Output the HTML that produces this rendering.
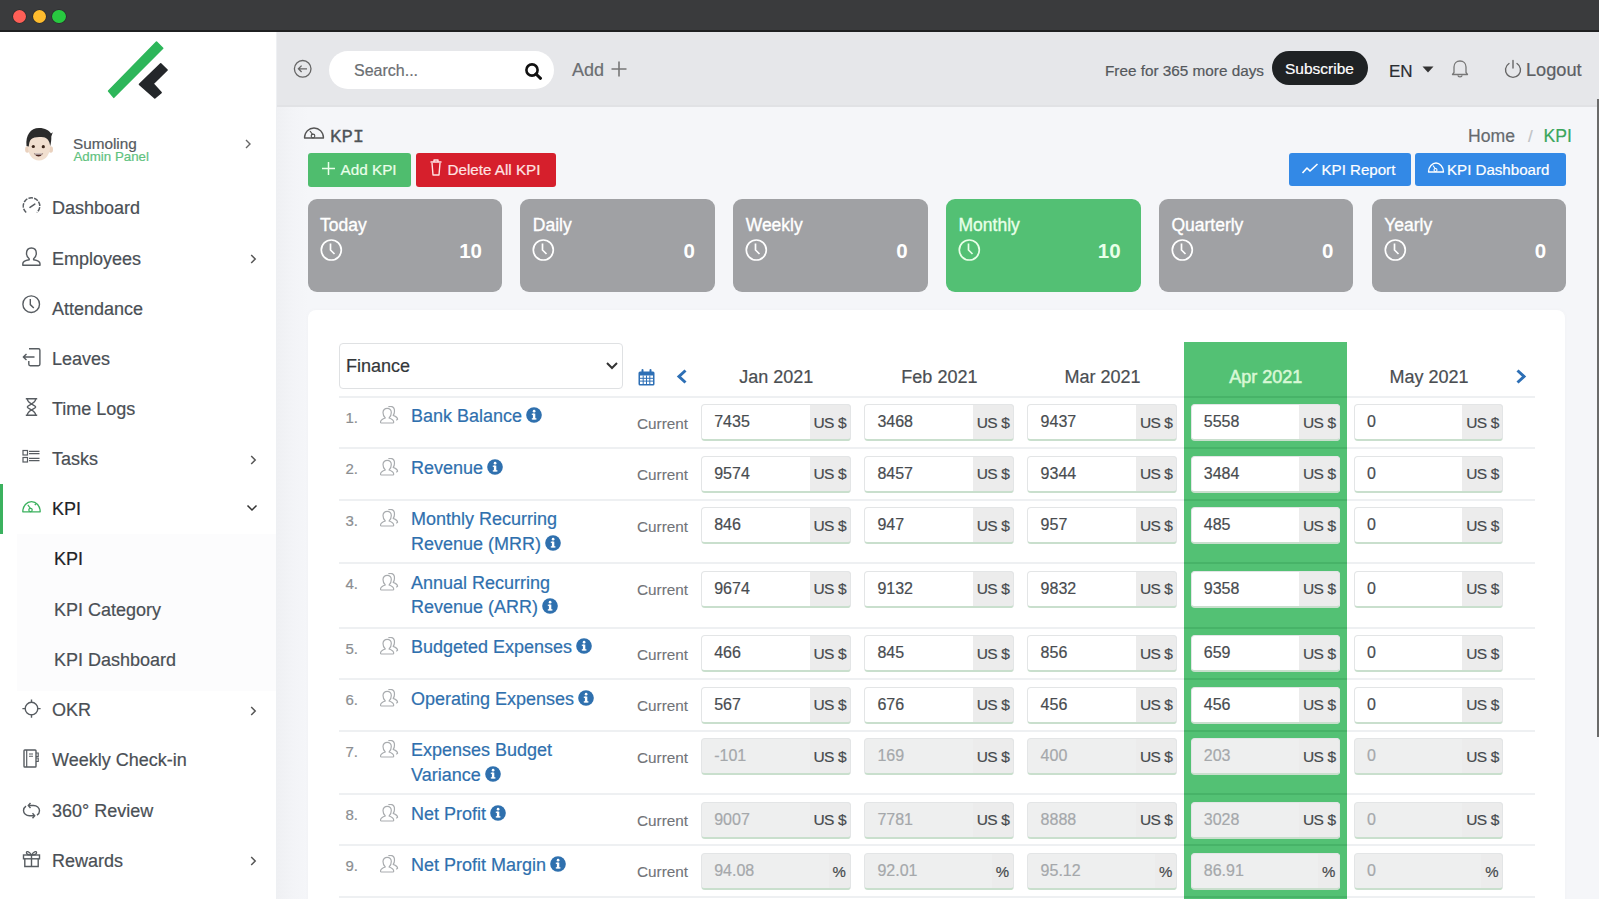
<!DOCTYPE html>
<html><head><meta charset="utf-8"><style>
html,body{margin:0;padding:0;width:1599px;height:899px;overflow:hidden;background:#f5f6f9}
.t{position:absolute;line-height:1;white-space:nowrap;font-family:'Liberation Sans',sans-serif;-webkit-text-stroke:0.2px currentColor}
.r{position:absolute;display:block}
</style></head><body>
<div class="r" style="left:0.00px;top:0.00px;width:1599.00px;height:899.00px;background:#f5f6f9"></div>
<div class="r" style="left:0.00px;top:32.00px;width:276.00px;height:867.00px;background:#ffffff"></div>
<div class="r" style="left:276.00px;top:32.00px;width:1.00px;height:867.00px;background:#eef0f3"></div>
<div class="r" style="left:277.00px;top:107.00px;width:32.00px;height:792.00px;background:linear-gradient(to right,#eff0f3,#f3f4f7 50%,#f5f6f9)"></div>
<div class="r" style="left:277.00px;top:32.00px;width:1322.00px;height:75.00px;background:#e6e7ea"></div>
<div class="r" style="left:277.00px;top:104.50px;width:1322.00px;height:2.50px;background:#e1e2e5"></div>
<div class="r" style="left:0.00px;top:0.00px;width:1599.00px;height:32.00px;background:#3a3b3d"></div>
<div class="r" style="left:0.00px;top:30.00px;width:1599.00px;height:2.00px;background:#1f2021"></div>
<div class="r" style="left:12.75px;top:9.75px;width:13.50px;height:13.50px;background:#fe5f57;border-radius:50%;box-shadow:0 0 0 0.6px rgba(0,0,0,0.35)"></div>
<div class="r" style="left:32.75px;top:9.75px;width:13.50px;height:13.50px;background:#febc2e;border-radius:50%;box-shadow:0 0 0 0.6px rgba(0,0,0,0.35)"></div>
<div class="r" style="left:52.25px;top:9.75px;width:13.50px;height:13.50px;background:#28c840;border-radius:50%;box-shadow:0 0 0 0.6px rgba(0,0,0,0.35)"></div>
<div class="r" style="left:1597.00px;top:99.00px;width:2.00px;height:638.00px;background:#6b6b6b"></div>
<svg class="r" style="left:100.00px;top:36.00px;" width="80" height="70" viewBox="0 0 80 70"><polygon points="56.5,6.1 62.7,12.2 13.8,61.3 8.6,55" fill="#2db65a" stroke="#2db65a" stroke-width="1.6" stroke-linejoin="round"/><polygon points="60.7,27.9 67.1,34 53.1,47.8 61.1,56.6 54.8,61.8 39.5,48.4" fill="#24272a" stroke="#24272a" stroke-width="1.6" stroke-linejoin="round"/></svg>
<svg class="r" style="left:24.00px;top:126.00px;" width="30" height="36" viewBox="0 0 30 36"><ellipse cx="3.3" cy="23.5" rx="2.2" ry="3.2" fill="#ead2bf"/><ellipse cx="26.8" cy="23.5" rx="2.2" ry="3.2" fill="#ead2bf"/><path d="M3.5,18 C3.5,9 8,6 15,6 C22,6 26.5,9 26.5,18 C26.5,28 22,34.5 15,34.5 C8,34.5 3.5,28 3.5,18 Z" fill="#f1dfcf"/><path d="M2.5,20 C1.5,9 6.5,2 15,2 C21,2 25.5,4.5 27,7.5 L28.8,6.3 L27.3,10.5 C27.5,13.5 27,17 26.2,20 C25.5,15 23.5,12 19.5,11.3 C14,10.4 9.5,11.2 7.2,13.2 C5.6,14.8 5,17 4.8,20.5 Z" fill="#2b2b2b"/><circle cx="9.3" cy="20.5" r="1.6" fill="#3a2418"/><circle cx="19.3" cy="20.7" r="1.6" fill="#3a2418"/><path d="M9.8,27.5 Q14.6,33.5 19.2,27.5 Z" fill="#4a2520"/><path d="M10.6,27.6 H18.4 L18,28.6 H11 Z" fill="#fff"/></svg>
<div class="t" style="left:73.00px;top:136.00px;font-size:15.3px;color:#555a60;font-weight:400;font-family:'Liberation Sans',sans-serif;">Sumoling</div>
<div class="t" style="left:73.50px;top:150.19px;font-size:13.3px;color:#5fc27e;font-weight:400;font-family:'Liberation Sans',sans-serif;">Admin Panel</div>
<svg class="r" style="left:243.00px;top:138.00px;" width="10" height="12" viewBox="0 0 10 12"><path d="M3,2 L7,6 L3,10" fill="none" stroke="#666" stroke-width="1.4"/></svg>
<div class="t" style="left:52.00px;top:199.10px;font-size:18px;color:#4a4f55;font-weight:400;font-family:'Liberation Sans',sans-serif;">Dashboard</div>
<div class="t" style="left:52.00px;top:249.50px;font-size:18px;color:#4a4f55;font-weight:400;font-family:'Liberation Sans',sans-serif;">Employees</div>
<svg class="r" style="left:248.00px;top:251.80px;" width="10" height="14" viewBox="0 0 10 14"><path d="M3.2,3 L7.2,7 L3.2,11" fill="none" stroke="#555" stroke-width="1.5"/></svg>
<div class="t" style="left:52.00px;top:299.70px;font-size:18px;color:#4a4f55;font-weight:400;font-family:'Liberation Sans',sans-serif;">Attendance</div>
<div class="t" style="left:52.00px;top:349.90px;font-size:18px;color:#4a4f55;font-weight:400;font-family:'Liberation Sans',sans-serif;">Leaves</div>
<div class="t" style="left:52.00px;top:400.10px;font-size:18px;color:#4a4f55;font-weight:400;font-family:'Liberation Sans',sans-serif;">Time Logs</div>
<div class="t" style="left:52.00px;top:450.30px;font-size:18px;color:#4a4f55;font-weight:400;font-family:'Liberation Sans',sans-serif;">Tasks</div>
<svg class="r" style="left:248.00px;top:452.60px;" width="10" height="14" viewBox="0 0 10 14"><path d="M3.2,3 L7.2,7 L3.2,11" fill="none" stroke="#555" stroke-width="1.5"/></svg>
<div class="t" style="left:52.00px;top:500.40px;font-size:18px;color:#1f2326;font-weight:400;font-family:'Liberation Sans',sans-serif;">KPI</div>
<div class="r" style="left:0.00px;top:484.00px;width:3.00px;height:50.00px;background:#3bb15e"></div>
<svg class="r" style="left:246.00px;top:503.00px;" width="12" height="10" viewBox="0 0 12 10"><path d="M1.5,2.5 L6,7 L10.5,2.5" fill="none" stroke="#333" stroke-width="1.5"/></svg>
<div class="r" style="left:17.00px;top:534.00px;width:259.00px;height:157.00px;background:#fcfcfd"></div>
<div class="t" style="left:54.00px;top:550.10px;font-size:18px;color:#1f2326;font-weight:400;font-family:'Liberation Sans',sans-serif;">KPI</div>
<div class="t" style="left:54.00px;top:600.70px;font-size:18px;color:#4a4f55;font-weight:400;font-family:'Liberation Sans',sans-serif;">KPI Category</div>
<div class="t" style="left:54.00px;top:650.70px;font-size:18px;color:#4a4f55;font-weight:400;font-family:'Liberation Sans',sans-serif;">KPI Dashboard</div>
<div class="t" style="left:52.00px;top:701.20px;font-size:18px;color:#4a4f55;font-weight:400;font-family:'Liberation Sans',sans-serif;">OKR</div>
<svg class="r" style="left:248.00px;top:703.50px;" width="10" height="14" viewBox="0 0 10 14"><path d="M3.2,3 L7.2,7 L3.2,11" fill="none" stroke="#555" stroke-width="1.5"/></svg>
<div class="t" style="left:52.00px;top:751.40px;font-size:18px;color:#4a4f55;font-weight:400;font-family:'Liberation Sans',sans-serif;">Weekly Check-in</div>
<div class="t" style="left:52.00px;top:801.70px;font-size:18px;color:#4a4f55;font-weight:400;font-family:'Liberation Sans',sans-serif;">360° Review</div>
<div class="t" style="left:52.00px;top:851.90px;font-size:18px;color:#4a4f55;font-weight:400;font-family:'Liberation Sans',sans-serif;">Rewards</div>
<svg class="r" style="left:248.00px;top:854.20px;" width="10" height="14" viewBox="0 0 10 14"><path d="M3.2,3 L7.2,7 L3.2,11" fill="none" stroke="#555" stroke-width="1.5"/></svg>
<svg class="r" style="left:293.00px;top:59.00px;" width="20" height="20" viewBox="0 0 20 20"><circle cx="9.7" cy="9.8" r="8.3" fill="none" stroke="#666" stroke-width="1.3"/><path d="M5.5,9.8 H14 M8.6,6.6 L5.4,9.8 L8.6,13" fill="none" stroke="#666" stroke-width="1.3"/></svg>
<div class="r" style="left:329.00px;top:51.00px;width:225.00px;height:38.00px;background:#ffffff;border-radius:19px"></div>
<div class="t" style="left:354.00px;top:63.10px;font-size:16px;color:#6b6e72;font-weight:400;font-family:'Liberation Sans',sans-serif;">Search...</div>
<svg class="r" style="left:524.00px;top:62.00px;" width="20" height="18" viewBox="0 0 20 18"><circle cx="8" cy="8" r="5.6" fill="none" stroke="#111" stroke-width="2.6"/><path d="M12,12 L16.5,16.3" stroke="#111" stroke-width="3" stroke-linecap="round"/></svg>
<div class="t" style="left:572.00px;top:60.70px;font-size:18px;color:#6b6e72;font-weight:400;font-family:'Liberation Sans',sans-serif;">Add</div>
<svg class="r" style="left:610.00px;top:60.00px;" width="18" height="18" viewBox="0 0 18 18"><path d="M9,1.5 V16.5 M1.5,9 H16.5" stroke="#777" stroke-width="1.6"/></svg>
<div class="t" style="left:1105.00px;top:63.29px;font-size:15.3px;color:#54585c;font-weight:400;font-family:'Liberation Sans',sans-serif;">Free for 365 more days</div>
<div class="r" style="left:1272.00px;top:50.50px;width:96.00px;height:34.00px;background:#1f2224;border-radius:17px"></div>
<div class="t" style="left:1285.00px;top:60.83px;font-size:15.5px;color:#ffffff;font-weight:400;font-family:'Liberation Sans',sans-serif;">Subscribe</div>
<div class="t" style="left:1389.00px;top:62.75px;font-size:17px;color:#2a2d30;font-weight:400;font-family:'Liberation Sans',sans-serif;">EN</div>
<svg class="r" style="left:1421.00px;top:64.50px;" width="14" height="10" viewBox="0 0 14 10"><path d="M1.5,1.5 H12.5 L7,7.5 Z" fill="#333"/></svg>
<svg class="r" style="left:1450.00px;top:58.00px;" width="20" height="21" viewBox="0 0 20 21"><path d="M4,14.5 V9 C4,5.5 6.5,3 10,3 C13.5,3 16,5.5 16,9 V14.5 L17.5,16.5 H2.5 Z M8,17.5 C8,19.3 12,19.3 12,17.5" fill="none" stroke="#777" stroke-width="1.3" stroke-linejoin="round"/></svg>
<svg class="r" style="left:1503.00px;top:59.00px;" width="20" height="20" viewBox="0 0 20 20"><path d="M6,4.5 A7.5,7.5 0 1 0 14,4.5 M10,1.5 V9" fill="none" stroke="#666" stroke-width="1.4" stroke-linecap="round"/></svg>
<div class="t" style="left:1526.00px;top:60.73px;font-size:18.2px;color:#5c6064;font-weight:400;font-family:'Liberation Sans',sans-serif;">Logout</div>
<svg class="r" style="left:303.00px;top:126.00px;" width="22" height="14" viewBox="0 0 22 14"><path d="M1.5,12 C1.5,6 6,2 11,2 C16,2 20.5,6 20.5,12 Z" fill="none" stroke="#555" stroke-width="1.3" stroke-linejoin="round"/><circle cx="10" cy="10" r="1.8" fill="none" stroke="#555" stroke-width="1.2"/><path d="M10,9 L7,5" stroke="#555" stroke-width="1.2"/></svg>
<div class="t" style="left:330.00px;top:127.55px;font-size:19px;color:#4f5458;font-weight:400;font-family:'Liberation Mono',monospace;-webkit-text-stroke:0.3px #4f5458">KPI</div>
<div class="r" style="left:307.50px;top:152.70px;width:103.00px;height:34.00px;background:#4fbd6e;border-radius:3px"></div>
<svg class="r" style="left:320.00px;top:160.00px;" width="17" height="17" viewBox="0 0 17 17"><path d="M8.5,2 V15 M2,8.5 H15" stroke="#eaffea" stroke-width="1.5"/></svg>
<div class="t" style="left:340.50px;top:162.40px;font-size:15.3px;color:#eaffea;font-weight:400;font-family:'Liberation Sans',sans-serif;">Add KPI</div>
<div class="r" style="left:415.80px;top:152.70px;width:140.00px;height:34.00px;background:#d61f2c;border-radius:3px"></div>
<svg class="r" style="left:428.00px;top:158.00px;" width="16" height="20" viewBox="0 0 16 20"><path d="M2.5,4 H13.5 M6,4 V2 H10 V4 M4,5 L5,17 H11 L12,5" fill="none" stroke="#ffe3e3" stroke-width="1.4" stroke-linejoin="round"/></svg>
<div class="t" style="left:447.50px;top:162.48px;font-size:15.2px;color:#ffe3e3;font-weight:400;font-family:'Liberation Sans',sans-serif;">Delete All KPI</div>
<div class="t" style="left:1468.00px;top:127.54px;font-size:17.6px;color:#666a6e;font-weight:400;font-family:'Liberation Sans',sans-serif;">Home</div>
<div class="t" style="left:1528.00px;top:128.05px;font-size:17px;color:#c0c2c5;font-weight:400;font-family:'Liberation Sans',sans-serif;">/</div>
<div class="t" style="left:1543.50px;top:127.54px;font-size:17.6px;color:#3aa65c;font-weight:400;font-family:'Liberation Sans',sans-serif;">KPI</div>
<div class="r" style="left:1289.00px;top:153.00px;width:122.00px;height:33.00px;background:#3389e6;border-radius:3px"></div>
<svg class="r" style="left:1301.00px;top:162.00px;" width="18" height="14" viewBox="0 0 18 14"><path d="M1.5,11 L6,6 L9,9 L16.5,2" fill="none" stroke="#fff" stroke-width="1.6" stroke-linejoin="round"/></svg>
<div class="t" style="left:1321.50px;top:162.06px;font-size:15.1px;color:#ffffff;font-weight:400;font-family:'Liberation Sans',sans-serif;">KPI Report</div>
<div class="r" style="left:1415.00px;top:153.00px;width:151.00px;height:33.00px;background:#3389e6;border-radius:3px"></div>
<svg class="r" style="left:1427.00px;top:161.00px;" width="18" height="13" viewBox="0 0 18 13"><path d="M1.5,11 C1.5,5.5 5.5,2 9,2 C12.5,2 16.5,5.5 16.5,11 Z" fill="none" stroke="#fff" stroke-width="1.3" stroke-linejoin="round"/><circle cx="8.5" cy="9" r="1.5" fill="none" stroke="#fff" stroke-width="1.1"/><path d="M8.5,8 L6,4.5" stroke="#fff" stroke-width="1.1"/></svg>
<div class="t" style="left:1447.00px;top:162.06px;font-size:15.1px;color:#ffffff;font-weight:400;font-family:'Liberation Sans',sans-serif;">KPI Dashboard</div>
<div class="r" style="left:307.50px;top:199.00px;width:194.50px;height:93.00px;background:#a0a1a4;border-radius:9px"></div>
<div class="t" style="left:320.00px;top:216.62px;font-size:17.5px;color:#ffffff;font-weight:400;font-family:'Liberation Sans',sans-serif;-webkit-text-stroke:0.35px #ffffff">Today</div>
<svg class="r" style="left:319.50px;top:238.00px;" width="23" height="24" viewBox="0 0 23 24"><circle cx="11.3" cy="12" r="10" fill="none" stroke="#ffffff" stroke-width="1.7"/><path d="M10.5,5.5 V12 L14.5,16" fill="none" stroke="#ffffff" stroke-width="1.7"/></svg>
<div class="t" style="left:482.00px;top:241.07px;font-size:20.5px;color:#ffffff;font-weight:700;font-family:'Liberation Sans',sans-serif;transform:translateX(-100%);-webkit-text-stroke:0">10</div>
<div class="r" style="left:520.35px;top:199.00px;width:194.50px;height:93.00px;background:#a0a1a4;border-radius:9px"></div>
<div class="t" style="left:532.85px;top:216.62px;font-size:17.5px;color:#ffffff;font-weight:400;font-family:'Liberation Sans',sans-serif;-webkit-text-stroke:0.35px #ffffff">Daily</div>
<svg class="r" style="left:532.35px;top:238.00px;" width="23" height="24" viewBox="0 0 23 24"><circle cx="11.3" cy="12" r="10" fill="none" stroke="#ffffff" stroke-width="1.7"/><path d="M10.5,5.5 V12 L14.5,16" fill="none" stroke="#ffffff" stroke-width="1.7"/></svg>
<div class="t" style="left:694.85px;top:241.07px;font-size:20.5px;color:#ffffff;font-weight:700;font-family:'Liberation Sans',sans-serif;transform:translateX(-100%);-webkit-text-stroke:0">0</div>
<div class="r" style="left:733.20px;top:199.00px;width:194.50px;height:93.00px;background:#a0a1a4;border-radius:9px"></div>
<div class="t" style="left:745.70px;top:216.62px;font-size:17.5px;color:#ffffff;font-weight:400;font-family:'Liberation Sans',sans-serif;-webkit-text-stroke:0.35px #ffffff">Weekly</div>
<svg class="r" style="left:745.20px;top:238.00px;" width="23" height="24" viewBox="0 0 23 24"><circle cx="11.3" cy="12" r="10" fill="none" stroke="#ffffff" stroke-width="1.7"/><path d="M10.5,5.5 V12 L14.5,16" fill="none" stroke="#ffffff" stroke-width="1.7"/></svg>
<div class="t" style="left:907.70px;top:241.07px;font-size:20.5px;color:#ffffff;font-weight:700;font-family:'Liberation Sans',sans-serif;transform:translateX(-100%);-webkit-text-stroke:0">0</div>
<div class="r" style="left:946.05px;top:199.00px;width:194.50px;height:93.00px;background:#53c074;border-radius:9px"></div>
<div class="t" style="left:958.55px;top:216.62px;font-size:17.5px;color:#e8ffe8;font-weight:400;font-family:'Liberation Sans',sans-serif;-webkit-text-stroke:0.35px #e8ffe8">Monthly</div>
<svg class="r" style="left:958.05px;top:238.00px;" width="23" height="24" viewBox="0 0 23 24"><circle cx="11.3" cy="12" r="10" fill="none" stroke="#e8ffe8" stroke-width="1.7"/><path d="M10.5,5.5 V12 L14.5,16" fill="none" stroke="#e8ffe8" stroke-width="1.7"/></svg>
<div class="t" style="left:1120.55px;top:241.07px;font-size:20.5px;color:#e8ffe8;font-weight:700;font-family:'Liberation Sans',sans-serif;transform:translateX(-100%);-webkit-text-stroke:0">10</div>
<div class="r" style="left:1158.90px;top:199.00px;width:194.50px;height:93.00px;background:#a0a1a4;border-radius:9px"></div>
<div class="t" style="left:1171.40px;top:216.62px;font-size:17.5px;color:#ffffff;font-weight:400;font-family:'Liberation Sans',sans-serif;-webkit-text-stroke:0.35px #ffffff">Quarterly</div>
<svg class="r" style="left:1170.90px;top:238.00px;" width="23" height="24" viewBox="0 0 23 24"><circle cx="11.3" cy="12" r="10" fill="none" stroke="#ffffff" stroke-width="1.7"/><path d="M10.5,5.5 V12 L14.5,16" fill="none" stroke="#ffffff" stroke-width="1.7"/></svg>
<div class="t" style="left:1333.40px;top:241.07px;font-size:20.5px;color:#ffffff;font-weight:700;font-family:'Liberation Sans',sans-serif;transform:translateX(-100%);-webkit-text-stroke:0">0</div>
<div class="r" style="left:1371.75px;top:199.00px;width:194.50px;height:93.00px;background:#a0a1a4;border-radius:9px"></div>
<div class="t" style="left:1384.25px;top:216.62px;font-size:17.5px;color:#ffffff;font-weight:400;font-family:'Liberation Sans',sans-serif;-webkit-text-stroke:0.35px #ffffff">Yearly</div>
<svg class="r" style="left:1383.75px;top:238.00px;" width="23" height="24" viewBox="0 0 23 24"><circle cx="11.3" cy="12" r="10" fill="none" stroke="#ffffff" stroke-width="1.7"/><path d="M10.5,5.5 V12 L14.5,16" fill="none" stroke="#ffffff" stroke-width="1.7"/></svg>
<div class="t" style="left:1546.25px;top:241.07px;font-size:20.5px;color:#ffffff;font-weight:700;font-family:'Liberation Sans',sans-serif;transform:translateX(-100%);-webkit-text-stroke:0">0</div>
<div class="r" style="left:308.00px;top:310.00px;width:1257.00px;height:620.00px;background:#ffffff;border-radius:8px;box-shadow:0 0 5px rgba(0,0,0,0.025)"></div>
<div class="r" style="left:1184.00px;top:342.30px;width:162.50px;height:600.00px;background:#53c174"></div>
<div class="r" style="left:339.00px;top:342.50px;width:284.00px;height:46.50px;border:1px solid #dfe1e3;border-radius:4px;box-sizing:border-box;background:#fff"></div>
<div class="t" style="left:346.00px;top:357.00px;font-size:18px;color:#33373a;font-weight:400;font-family:'Liberation Sans',sans-serif;">Finance</div>
<svg class="r" style="left:604.00px;top:360.00px;" width="16" height="12" viewBox="0 0 16 12"><path d="M3,3 L8,8 L13,3" fill="none" stroke="#333" stroke-width="2"/></svg>
<svg class="r" style="left:637.00px;top:368.00px;" width="20" height="19" viewBox="0 0 20 19"><rect x="1.5" y="3.5" width="16" height="14" rx="1.5" fill="#2d6fb5"/><rect x="3" y="7.5" width="13" height="8.5" fill="#fff"/><path d="M3,10.3 H16 M3,13.1 H16 M6.2,7.5 V16 M9.5,7.5 V16 M12.8,7.5 V16" stroke="#2d6fb5" stroke-width="1"/><rect x="4.5" y="1" width="2" height="4" rx="1" fill="#2d6fb5"/><rect x="12.5" y="1" width="2" height="4" rx="1" fill="#2d6fb5"/></svg>
<svg class="r" style="left:674.00px;top:368.00px;" width="16" height="17" viewBox="0 0 16 17"><path d="M11.5,2.5 L5,8.5 L11.5,14.5" fill="none" stroke="#2d6fb5" stroke-width="3"/></svg>
<svg class="r" style="left:1513.00px;top:368.00px;" width="16" height="17" viewBox="0 0 16 17"><path d="M4.5,2.5 L11,8.5 L4.5,14.5" fill="none" stroke="#2d6fb5" stroke-width="3"/></svg>
<div class="t" style="left:776.20px;top:368.45px;font-size:18px;color:#4a4e52;font-weight:400;font-family:'Liberation Sans',sans-serif;transform:translateX(-50%)">Jan 2021</div>
<div class="t" style="left:939.40px;top:368.45px;font-size:18px;color:#4a4e52;font-weight:400;font-family:'Liberation Sans',sans-serif;transform:translateX(-50%)">Feb 2021</div>
<div class="t" style="left:1102.60px;top:368.45px;font-size:18px;color:#4a4e52;font-weight:400;font-family:'Liberation Sans',sans-serif;transform:translateX(-50%)">Mar 2021</div>
<div class="t" style="left:1265.80px;top:368.45px;font-size:18px;color:#d8f8d6;font-weight:400;font-family:'Liberation Sans',sans-serif;transform:translateX(-50%);-webkit-text-stroke:0.55px #d8f8d6">Apr 2021</div>
<div class="t" style="left:1429.00px;top:368.45px;font-size:18px;color:#4a4e52;font-weight:400;font-family:'Liberation Sans',sans-serif;transform:translateX(-50%)">May 2021</div>
<div class="r" style="left:339.00px;top:395.50px;width:1196.00px;height:2.00px;background:#eef0f2"></div>
<div class="r" style="left:1184.00px;top:395.50px;width:162.50px;height:2.00px;background:#47b368"></div>
<div class="r" style="left:339.00px;top:447.00px;width:1196.00px;height:2.00px;background:#eef0f2"></div>
<div class="r" style="left:1184.00px;top:447.00px;width:162.50px;height:2.00px;background:#47b368"></div>
<div class="r" style="left:339.00px;top:498.50px;width:1196.00px;height:2.00px;background:#eef0f2"></div>
<div class="r" style="left:1184.00px;top:498.50px;width:162.50px;height:2.00px;background:#47b368"></div>
<div class="r" style="left:339.00px;top:562.00px;width:1196.00px;height:2.00px;background:#eef0f2"></div>
<div class="r" style="left:1184.00px;top:562.00px;width:162.50px;height:2.00px;background:#47b368"></div>
<div class="r" style="left:339.00px;top:626.50px;width:1196.00px;height:2.00px;background:#eef0f2"></div>
<div class="r" style="left:1184.00px;top:626.50px;width:162.50px;height:2.00px;background:#47b368"></div>
<div class="r" style="left:339.00px;top:678.00px;width:1196.00px;height:2.00px;background:#eef0f2"></div>
<div class="r" style="left:1184.00px;top:678.00px;width:162.50px;height:2.00px;background:#47b368"></div>
<div class="r" style="left:339.00px;top:729.50px;width:1196.00px;height:2.00px;background:#eef0f2"></div>
<div class="r" style="left:1184.00px;top:729.50px;width:162.50px;height:2.00px;background:#47b368"></div>
<div class="r" style="left:339.00px;top:793.00px;width:1196.00px;height:2.00px;background:#eef0f2"></div>
<div class="r" style="left:1184.00px;top:793.00px;width:162.50px;height:2.00px;background:#47b368"></div>
<div class="r" style="left:339.00px;top:844.00px;width:1196.00px;height:2.00px;background:#eef0f2"></div>
<div class="r" style="left:1184.00px;top:844.00px;width:162.50px;height:2.00px;background:#47b368"></div>
<div class="r" style="left:339.00px;top:896.00px;width:1196.00px;height:2.00px;background:#eef0f2"></div>
<div class="r" style="left:1184.00px;top:896.00px;width:162.50px;height:2.00px;background:#47b368"></div>
<div class="t" style="left:345.50px;top:409.95px;font-size:15px;color:#8b8e91;font-weight:400;font-family:'Liberation Sans',sans-serif;">1.</div>
<svg class="r" style="left:380.00px;top:406.00px;" width="19" height="18" viewBox="0 0 19 18"><path d="M5.3,12 C3.6,10.6 3,8.6 3,6.6 C3,4 4.8,2.3 7.2,2.3 C9.6,2.3 11.3,4 11.3,6.6 C11.3,8.6 10.7,10.6 9.1,12 C12,13 13.7,14.5 13.7,16.2 Q13.7,17 12.9,17 H1.3 Q0.5,17 0.5,16.2 C0.5,14.5 2.3,13 5.3,12 Z" fill="none" stroke="#a9acaf" stroke-width="1.2" stroke-linejoin="round"/><path d="M8.4,0.6 C8.9,0.4 9.5,0.3 10.1,0.3 C12.6,0.3 14.5,2.2 14.5,5 C14.5,7 13.9,8.5 13.2,9.4 C15.6,10.4 17.6,11.6 17.6,13.3 L16.2,14.2" fill="none" stroke="#a9acaf" stroke-width="1.2" stroke-linejoin="round"/></svg>
<div class="t" style="left:411.00px;top:407.40px;font-size:18px;color:#2f70ae;font-weight:400;font-family:'Liberation Sans',sans-serif;">Bank Balance<svg width="16" height="16" viewBox="0 0 16 16" style="vertical-align:-1px;margin-left:4px"><circle cx="8" cy="8" r="7.8" fill="#2f70ae"/><rect x="6.9" y="6.6" width="2.4" height="5.6" fill="#fff"/><rect x="5.8" y="11.2" width="4.6" height="1.4" fill="#fff"/><rect x="5.8" y="6.6" width="2.5" height="1.3" fill="#fff"/><circle cx="8.1" cy="4.2" r="1.35" fill="#fff"/></svg></div>
<div class="t" style="left:637.00px;top:415.80px;font-size:15.3px;color:#717478;font-weight:400;font-family:'Liberation Sans',sans-serif;-webkit-text-stroke:0.1px #717478">Current</div>
<div class="r" style="left:701.00px;top:404.00px;width:149.50px;height:37.00px;background:#ffffff;border:1px solid #e3e5e6;border-bottom:2px solid #c9dfcd;border-radius:4px;box-sizing:border-box"></div>
<div class="r" style="left:809.50px;top:404.00px;width:41.00px;height:37.00px;background:#ececec;border:1px solid #e3e5e6;border-bottom:2px solid #c9dfcd;border-left:none;border-radius:0 4px 4px 0;box-sizing:border-box"></div>
<div class="t" style="left:714.20px;top:414.10px;font-size:16px;color:#484c50;font-weight:400;font-family:'Liberation Sans',sans-serif;">7435</div>
<div class="t" style="left:813.50px;top:414.82px;font-size:15.5px;color:#45494c;font-weight:400;font-family:'Liberation Sans',sans-serif;"><span style="letter-spacing:-0.7px">US</span> $</div>
<div class="r" style="left:864.20px;top:404.00px;width:149.50px;height:37.00px;background:#ffffff;border:1px solid #e3e5e6;border-bottom:2px solid #c9dfcd;border-radius:4px;box-sizing:border-box"></div>
<div class="r" style="left:972.70px;top:404.00px;width:41.00px;height:37.00px;background:#ececec;border:1px solid #e3e5e6;border-bottom:2px solid #c9dfcd;border-left:none;border-radius:0 4px 4px 0;box-sizing:border-box"></div>
<div class="t" style="left:877.40px;top:414.10px;font-size:16px;color:#484c50;font-weight:400;font-family:'Liberation Sans',sans-serif;">3468</div>
<div class="t" style="left:976.70px;top:414.82px;font-size:15.5px;color:#45494c;font-weight:400;font-family:'Liberation Sans',sans-serif;"><span style="letter-spacing:-0.7px">US</span> $</div>
<div class="r" style="left:1027.40px;top:404.00px;width:149.50px;height:37.00px;background:#ffffff;border:1px solid #e3e5e6;border-bottom:2px solid #c9dfcd;border-radius:4px;box-sizing:border-box"></div>
<div class="r" style="left:1135.90px;top:404.00px;width:41.00px;height:37.00px;background:#ececec;border:1px solid #e3e5e6;border-bottom:2px solid #c9dfcd;border-left:none;border-radius:0 4px 4px 0;box-sizing:border-box"></div>
<div class="t" style="left:1040.60px;top:414.10px;font-size:16px;color:#484c50;font-weight:400;font-family:'Liberation Sans',sans-serif;">9437</div>
<div class="t" style="left:1139.90px;top:414.82px;font-size:15.5px;color:#45494c;font-weight:400;font-family:'Liberation Sans',sans-serif;"><span style="letter-spacing:-0.7px">US</span> $</div>
<div class="r" style="left:1190.60px;top:404.00px;width:149.50px;height:37.00px;background:#ffffff;border:1px solid #e3e5e6;border-bottom:2px solid #c9dfcd;border-radius:4px;box-sizing:border-box"></div>
<div class="r" style="left:1299.10px;top:404.00px;width:41.00px;height:37.00px;background:#ececec;border:1px solid #e3e5e6;border-bottom:2px solid #c9dfcd;border-left:none;border-radius:0 4px 4px 0;box-sizing:border-box"></div>
<div class="t" style="left:1203.80px;top:414.10px;font-size:16px;color:#484c50;font-weight:400;font-family:'Liberation Sans',sans-serif;">5558</div>
<div class="t" style="left:1303.10px;top:414.82px;font-size:15.5px;color:#45494c;font-weight:400;font-family:'Liberation Sans',sans-serif;"><span style="letter-spacing:-0.7px">US</span> $</div>
<div class="r" style="left:1353.80px;top:404.00px;width:149.50px;height:37.00px;background:#ffffff;border:1px solid #e3e5e6;border-bottom:2px solid #c9dfcd;border-radius:4px;box-sizing:border-box"></div>
<div class="r" style="left:1462.30px;top:404.00px;width:41.00px;height:37.00px;background:#ececec;border:1px solid #e3e5e6;border-bottom:2px solid #c9dfcd;border-left:none;border-radius:0 4px 4px 0;box-sizing:border-box"></div>
<div class="t" style="left:1367.00px;top:414.10px;font-size:16px;color:#484c50;font-weight:400;font-family:'Liberation Sans',sans-serif;">0</div>
<div class="t" style="left:1466.30px;top:414.82px;font-size:15.5px;color:#45494c;font-weight:400;font-family:'Liberation Sans',sans-serif;"><span style="letter-spacing:-0.7px">US</span> $</div>
<div class="t" style="left:345.50px;top:461.45px;font-size:15px;color:#8b8e91;font-weight:400;font-family:'Liberation Sans',sans-serif;">2.</div>
<svg class="r" style="left:380.00px;top:457.50px;" width="19" height="18" viewBox="0 0 19 18"><path d="M5.3,12 C3.6,10.6 3,8.6 3,6.6 C3,4 4.8,2.3 7.2,2.3 C9.6,2.3 11.3,4 11.3,6.6 C11.3,8.6 10.7,10.6 9.1,12 C12,13 13.7,14.5 13.7,16.2 Q13.7,17 12.9,17 H1.3 Q0.5,17 0.5,16.2 C0.5,14.5 2.3,13 5.3,12 Z" fill="none" stroke="#a9acaf" stroke-width="1.2" stroke-linejoin="round"/><path d="M8.4,0.6 C8.9,0.4 9.5,0.3 10.1,0.3 C12.6,0.3 14.5,2.2 14.5,5 C14.5,7 13.9,8.5 13.2,9.4 C15.6,10.4 17.6,11.6 17.6,13.3 L16.2,14.2" fill="none" stroke="#a9acaf" stroke-width="1.2" stroke-linejoin="round"/></svg>
<div class="t" style="left:411.00px;top:458.90px;font-size:18px;color:#2f70ae;font-weight:400;font-family:'Liberation Sans',sans-serif;">Revenue<svg width="16" height="16" viewBox="0 0 16 16" style="vertical-align:-1px;margin-left:4px"><circle cx="8" cy="8" r="7.8" fill="#2f70ae"/><rect x="6.9" y="6.6" width="2.4" height="5.6" fill="#fff"/><rect x="5.8" y="11.2" width="4.6" height="1.4" fill="#fff"/><rect x="5.8" y="6.6" width="2.5" height="1.3" fill="#fff"/><circle cx="8.1" cy="4.2" r="1.35" fill="#fff"/></svg></div>
<div class="t" style="left:637.00px;top:467.30px;font-size:15.3px;color:#717478;font-weight:400;font-family:'Liberation Sans',sans-serif;-webkit-text-stroke:0.1px #717478">Current</div>
<div class="r" style="left:701.00px;top:455.50px;width:149.50px;height:37.00px;background:#ffffff;border:1px solid #e3e5e6;border-bottom:2px solid #c9dfcd;border-radius:4px;box-sizing:border-box"></div>
<div class="r" style="left:809.50px;top:455.50px;width:41.00px;height:37.00px;background:#ececec;border:1px solid #e3e5e6;border-bottom:2px solid #c9dfcd;border-left:none;border-radius:0 4px 4px 0;box-sizing:border-box"></div>
<div class="t" style="left:714.20px;top:465.60px;font-size:16px;color:#484c50;font-weight:400;font-family:'Liberation Sans',sans-serif;">9574</div>
<div class="t" style="left:813.50px;top:466.32px;font-size:15.5px;color:#45494c;font-weight:400;font-family:'Liberation Sans',sans-serif;"><span style="letter-spacing:-0.7px">US</span> $</div>
<div class="r" style="left:864.20px;top:455.50px;width:149.50px;height:37.00px;background:#ffffff;border:1px solid #e3e5e6;border-bottom:2px solid #c9dfcd;border-radius:4px;box-sizing:border-box"></div>
<div class="r" style="left:972.70px;top:455.50px;width:41.00px;height:37.00px;background:#ececec;border:1px solid #e3e5e6;border-bottom:2px solid #c9dfcd;border-left:none;border-radius:0 4px 4px 0;box-sizing:border-box"></div>
<div class="t" style="left:877.40px;top:465.60px;font-size:16px;color:#484c50;font-weight:400;font-family:'Liberation Sans',sans-serif;">8457</div>
<div class="t" style="left:976.70px;top:466.32px;font-size:15.5px;color:#45494c;font-weight:400;font-family:'Liberation Sans',sans-serif;"><span style="letter-spacing:-0.7px">US</span> $</div>
<div class="r" style="left:1027.40px;top:455.50px;width:149.50px;height:37.00px;background:#ffffff;border:1px solid #e3e5e6;border-bottom:2px solid #c9dfcd;border-radius:4px;box-sizing:border-box"></div>
<div class="r" style="left:1135.90px;top:455.50px;width:41.00px;height:37.00px;background:#ececec;border:1px solid #e3e5e6;border-bottom:2px solid #c9dfcd;border-left:none;border-radius:0 4px 4px 0;box-sizing:border-box"></div>
<div class="t" style="left:1040.60px;top:465.60px;font-size:16px;color:#484c50;font-weight:400;font-family:'Liberation Sans',sans-serif;">9344</div>
<div class="t" style="left:1139.90px;top:466.32px;font-size:15.5px;color:#45494c;font-weight:400;font-family:'Liberation Sans',sans-serif;"><span style="letter-spacing:-0.7px">US</span> $</div>
<div class="r" style="left:1190.60px;top:455.50px;width:149.50px;height:37.00px;background:#ffffff;border:1px solid #e3e5e6;border-bottom:2px solid #c9dfcd;border-radius:4px;box-sizing:border-box"></div>
<div class="r" style="left:1299.10px;top:455.50px;width:41.00px;height:37.00px;background:#ececec;border:1px solid #e3e5e6;border-bottom:2px solid #c9dfcd;border-left:none;border-radius:0 4px 4px 0;box-sizing:border-box"></div>
<div class="t" style="left:1203.80px;top:465.60px;font-size:16px;color:#484c50;font-weight:400;font-family:'Liberation Sans',sans-serif;">3484</div>
<div class="t" style="left:1303.10px;top:466.32px;font-size:15.5px;color:#45494c;font-weight:400;font-family:'Liberation Sans',sans-serif;"><span style="letter-spacing:-0.7px">US</span> $</div>
<div class="r" style="left:1353.80px;top:455.50px;width:149.50px;height:37.00px;background:#ffffff;border:1px solid #e3e5e6;border-bottom:2px solid #c9dfcd;border-radius:4px;box-sizing:border-box"></div>
<div class="r" style="left:1462.30px;top:455.50px;width:41.00px;height:37.00px;background:#ececec;border:1px solid #e3e5e6;border-bottom:2px solid #c9dfcd;border-left:none;border-radius:0 4px 4px 0;box-sizing:border-box"></div>
<div class="t" style="left:1367.00px;top:465.60px;font-size:16px;color:#484c50;font-weight:400;font-family:'Liberation Sans',sans-serif;">0</div>
<div class="t" style="left:1466.30px;top:466.32px;font-size:15.5px;color:#45494c;font-weight:400;font-family:'Liberation Sans',sans-serif;"><span style="letter-spacing:-0.7px">US</span> $</div>
<div class="t" style="left:345.50px;top:512.95px;font-size:15px;color:#8b8e91;font-weight:400;font-family:'Liberation Sans',sans-serif;">3.</div>
<svg class="r" style="left:380.00px;top:509.00px;" width="19" height="18" viewBox="0 0 19 18"><path d="M5.3,12 C3.6,10.6 3,8.6 3,6.6 C3,4 4.8,2.3 7.2,2.3 C9.6,2.3 11.3,4 11.3,6.6 C11.3,8.6 10.7,10.6 9.1,12 C12,13 13.7,14.5 13.7,16.2 Q13.7,17 12.9,17 H1.3 Q0.5,17 0.5,16.2 C0.5,14.5 2.3,13 5.3,12 Z" fill="none" stroke="#a9acaf" stroke-width="1.2" stroke-linejoin="round"/><path d="M8.4,0.6 C8.9,0.4 9.5,0.3 10.1,0.3 C12.6,0.3 14.5,2.2 14.5,5 C14.5,7 13.9,8.5 13.2,9.4 C15.6,10.4 17.6,11.6 17.6,13.3 L16.2,14.2" fill="none" stroke="#a9acaf" stroke-width="1.2" stroke-linejoin="round"/></svg>
<div class="t" style="left:411.00px;top:510.40px;font-size:18px;color:#2f70ae;font-weight:400;font-family:'Liberation Sans',sans-serif;">Monthly Recurring</div>
<div class="t" style="left:411.00px;top:534.90px;font-size:18px;color:#2f70ae;font-weight:400;font-family:'Liberation Sans',sans-serif;">Revenue (MRR)<svg width="16" height="16" viewBox="0 0 16 16" style="vertical-align:-1px;margin-left:4px"><circle cx="8" cy="8" r="7.8" fill="#2f70ae"/><rect x="6.9" y="6.6" width="2.4" height="5.6" fill="#fff"/><rect x="5.8" y="11.2" width="4.6" height="1.4" fill="#fff"/><rect x="5.8" y="6.6" width="2.5" height="1.3" fill="#fff"/><circle cx="8.1" cy="4.2" r="1.35" fill="#fff"/></svg></div>
<div class="t" style="left:637.00px;top:518.79px;font-size:15.3px;color:#717478;font-weight:400;font-family:'Liberation Sans',sans-serif;-webkit-text-stroke:0.1px #717478">Current</div>
<div class="r" style="left:701.00px;top:507.00px;width:149.50px;height:37.00px;background:#ffffff;border:1px solid #e3e5e6;border-bottom:2px solid #c9dfcd;border-radius:4px;box-sizing:border-box"></div>
<div class="r" style="left:809.50px;top:507.00px;width:41.00px;height:37.00px;background:#ececec;border:1px solid #e3e5e6;border-bottom:2px solid #c9dfcd;border-left:none;border-radius:0 4px 4px 0;box-sizing:border-box"></div>
<div class="t" style="left:714.20px;top:517.10px;font-size:16px;color:#484c50;font-weight:400;font-family:'Liberation Sans',sans-serif;">846</div>
<div class="t" style="left:813.50px;top:517.83px;font-size:15.5px;color:#45494c;font-weight:400;font-family:'Liberation Sans',sans-serif;"><span style="letter-spacing:-0.7px">US</span> $</div>
<div class="r" style="left:864.20px;top:507.00px;width:149.50px;height:37.00px;background:#ffffff;border:1px solid #e3e5e6;border-bottom:2px solid #c9dfcd;border-radius:4px;box-sizing:border-box"></div>
<div class="r" style="left:972.70px;top:507.00px;width:41.00px;height:37.00px;background:#ececec;border:1px solid #e3e5e6;border-bottom:2px solid #c9dfcd;border-left:none;border-radius:0 4px 4px 0;box-sizing:border-box"></div>
<div class="t" style="left:877.40px;top:517.10px;font-size:16px;color:#484c50;font-weight:400;font-family:'Liberation Sans',sans-serif;">947</div>
<div class="t" style="left:976.70px;top:517.83px;font-size:15.5px;color:#45494c;font-weight:400;font-family:'Liberation Sans',sans-serif;"><span style="letter-spacing:-0.7px">US</span> $</div>
<div class="r" style="left:1027.40px;top:507.00px;width:149.50px;height:37.00px;background:#ffffff;border:1px solid #e3e5e6;border-bottom:2px solid #c9dfcd;border-radius:4px;box-sizing:border-box"></div>
<div class="r" style="left:1135.90px;top:507.00px;width:41.00px;height:37.00px;background:#ececec;border:1px solid #e3e5e6;border-bottom:2px solid #c9dfcd;border-left:none;border-radius:0 4px 4px 0;box-sizing:border-box"></div>
<div class="t" style="left:1040.60px;top:517.10px;font-size:16px;color:#484c50;font-weight:400;font-family:'Liberation Sans',sans-serif;">957</div>
<div class="t" style="left:1139.90px;top:517.83px;font-size:15.5px;color:#45494c;font-weight:400;font-family:'Liberation Sans',sans-serif;"><span style="letter-spacing:-0.7px">US</span> $</div>
<div class="r" style="left:1190.60px;top:507.00px;width:149.50px;height:37.00px;background:#ffffff;border:1px solid #e3e5e6;border-bottom:2px solid #c9dfcd;border-radius:4px;box-sizing:border-box"></div>
<div class="r" style="left:1299.10px;top:507.00px;width:41.00px;height:37.00px;background:#ececec;border:1px solid #e3e5e6;border-bottom:2px solid #c9dfcd;border-left:none;border-radius:0 4px 4px 0;box-sizing:border-box"></div>
<div class="t" style="left:1203.80px;top:517.10px;font-size:16px;color:#484c50;font-weight:400;font-family:'Liberation Sans',sans-serif;">485</div>
<div class="t" style="left:1303.10px;top:517.83px;font-size:15.5px;color:#45494c;font-weight:400;font-family:'Liberation Sans',sans-serif;"><span style="letter-spacing:-0.7px">US</span> $</div>
<div class="r" style="left:1353.80px;top:507.00px;width:149.50px;height:37.00px;background:#ffffff;border:1px solid #e3e5e6;border-bottom:2px solid #c9dfcd;border-radius:4px;box-sizing:border-box"></div>
<div class="r" style="left:1462.30px;top:507.00px;width:41.00px;height:37.00px;background:#ececec;border:1px solid #e3e5e6;border-bottom:2px solid #c9dfcd;border-left:none;border-radius:0 4px 4px 0;box-sizing:border-box"></div>
<div class="t" style="left:1367.00px;top:517.10px;font-size:16px;color:#484c50;font-weight:400;font-family:'Liberation Sans',sans-serif;">0</div>
<div class="t" style="left:1466.30px;top:517.83px;font-size:15.5px;color:#45494c;font-weight:400;font-family:'Liberation Sans',sans-serif;"><span style="letter-spacing:-0.7px">US</span> $</div>
<div class="t" style="left:345.50px;top:576.45px;font-size:15px;color:#8b8e91;font-weight:400;font-family:'Liberation Sans',sans-serif;">4.</div>
<svg class="r" style="left:380.00px;top:572.50px;" width="19" height="18" viewBox="0 0 19 18"><path d="M5.3,12 C3.6,10.6 3,8.6 3,6.6 C3,4 4.8,2.3 7.2,2.3 C9.6,2.3 11.3,4 11.3,6.6 C11.3,8.6 10.7,10.6 9.1,12 C12,13 13.7,14.5 13.7,16.2 Q13.7,17 12.9,17 H1.3 Q0.5,17 0.5,16.2 C0.5,14.5 2.3,13 5.3,12 Z" fill="none" stroke="#a9acaf" stroke-width="1.2" stroke-linejoin="round"/><path d="M8.4,0.6 C8.9,0.4 9.5,0.3 10.1,0.3 C12.6,0.3 14.5,2.2 14.5,5 C14.5,7 13.9,8.5 13.2,9.4 C15.6,10.4 17.6,11.6 17.6,13.3 L16.2,14.2" fill="none" stroke="#a9acaf" stroke-width="1.2" stroke-linejoin="round"/></svg>
<div class="t" style="left:411.00px;top:573.90px;font-size:18px;color:#2f70ae;font-weight:400;font-family:'Liberation Sans',sans-serif;">Annual Recurring</div>
<div class="t" style="left:411.00px;top:598.40px;font-size:18px;color:#2f70ae;font-weight:400;font-family:'Liberation Sans',sans-serif;">Revenue (ARR)<svg width="16" height="16" viewBox="0 0 16 16" style="vertical-align:-1px;margin-left:4px"><circle cx="8" cy="8" r="7.8" fill="#2f70ae"/><rect x="6.9" y="6.6" width="2.4" height="5.6" fill="#fff"/><rect x="5.8" y="11.2" width="4.6" height="1.4" fill="#fff"/><rect x="5.8" y="6.6" width="2.5" height="1.3" fill="#fff"/><circle cx="8.1" cy="4.2" r="1.35" fill="#fff"/></svg></div>
<div class="t" style="left:637.00px;top:582.29px;font-size:15.3px;color:#717478;font-weight:400;font-family:'Liberation Sans',sans-serif;-webkit-text-stroke:0.1px #717478">Current</div>
<div class="r" style="left:701.00px;top:570.50px;width:149.50px;height:37.00px;background:#ffffff;border:1px solid #e3e5e6;border-bottom:2px solid #c9dfcd;border-radius:4px;box-sizing:border-box"></div>
<div class="r" style="left:809.50px;top:570.50px;width:41.00px;height:37.00px;background:#ececec;border:1px solid #e3e5e6;border-bottom:2px solid #c9dfcd;border-left:none;border-radius:0 4px 4px 0;box-sizing:border-box"></div>
<div class="t" style="left:714.20px;top:580.60px;font-size:16px;color:#484c50;font-weight:400;font-family:'Liberation Sans',sans-serif;">9674</div>
<div class="t" style="left:813.50px;top:581.33px;font-size:15.5px;color:#45494c;font-weight:400;font-family:'Liberation Sans',sans-serif;"><span style="letter-spacing:-0.7px">US</span> $</div>
<div class="r" style="left:864.20px;top:570.50px;width:149.50px;height:37.00px;background:#ffffff;border:1px solid #e3e5e6;border-bottom:2px solid #c9dfcd;border-radius:4px;box-sizing:border-box"></div>
<div class="r" style="left:972.70px;top:570.50px;width:41.00px;height:37.00px;background:#ececec;border:1px solid #e3e5e6;border-bottom:2px solid #c9dfcd;border-left:none;border-radius:0 4px 4px 0;box-sizing:border-box"></div>
<div class="t" style="left:877.40px;top:580.60px;font-size:16px;color:#484c50;font-weight:400;font-family:'Liberation Sans',sans-serif;">9132</div>
<div class="t" style="left:976.70px;top:581.33px;font-size:15.5px;color:#45494c;font-weight:400;font-family:'Liberation Sans',sans-serif;"><span style="letter-spacing:-0.7px">US</span> $</div>
<div class="r" style="left:1027.40px;top:570.50px;width:149.50px;height:37.00px;background:#ffffff;border:1px solid #e3e5e6;border-bottom:2px solid #c9dfcd;border-radius:4px;box-sizing:border-box"></div>
<div class="r" style="left:1135.90px;top:570.50px;width:41.00px;height:37.00px;background:#ececec;border:1px solid #e3e5e6;border-bottom:2px solid #c9dfcd;border-left:none;border-radius:0 4px 4px 0;box-sizing:border-box"></div>
<div class="t" style="left:1040.60px;top:580.60px;font-size:16px;color:#484c50;font-weight:400;font-family:'Liberation Sans',sans-serif;">9832</div>
<div class="t" style="left:1139.90px;top:581.33px;font-size:15.5px;color:#45494c;font-weight:400;font-family:'Liberation Sans',sans-serif;"><span style="letter-spacing:-0.7px">US</span> $</div>
<div class="r" style="left:1190.60px;top:570.50px;width:149.50px;height:37.00px;background:#ffffff;border:1px solid #e3e5e6;border-bottom:2px solid #c9dfcd;border-radius:4px;box-sizing:border-box"></div>
<div class="r" style="left:1299.10px;top:570.50px;width:41.00px;height:37.00px;background:#ececec;border:1px solid #e3e5e6;border-bottom:2px solid #c9dfcd;border-left:none;border-radius:0 4px 4px 0;box-sizing:border-box"></div>
<div class="t" style="left:1203.80px;top:580.60px;font-size:16px;color:#484c50;font-weight:400;font-family:'Liberation Sans',sans-serif;">9358</div>
<div class="t" style="left:1303.10px;top:581.33px;font-size:15.5px;color:#45494c;font-weight:400;font-family:'Liberation Sans',sans-serif;"><span style="letter-spacing:-0.7px">US</span> $</div>
<div class="r" style="left:1353.80px;top:570.50px;width:149.50px;height:37.00px;background:#ffffff;border:1px solid #e3e5e6;border-bottom:2px solid #c9dfcd;border-radius:4px;box-sizing:border-box"></div>
<div class="r" style="left:1462.30px;top:570.50px;width:41.00px;height:37.00px;background:#ececec;border:1px solid #e3e5e6;border-bottom:2px solid #c9dfcd;border-left:none;border-radius:0 4px 4px 0;box-sizing:border-box"></div>
<div class="t" style="left:1367.00px;top:580.60px;font-size:16px;color:#484c50;font-weight:400;font-family:'Liberation Sans',sans-serif;">0</div>
<div class="t" style="left:1466.30px;top:581.33px;font-size:15.5px;color:#45494c;font-weight:400;font-family:'Liberation Sans',sans-serif;"><span style="letter-spacing:-0.7px">US</span> $</div>
<div class="t" style="left:345.50px;top:640.95px;font-size:15px;color:#8b8e91;font-weight:400;font-family:'Liberation Sans',sans-serif;">5.</div>
<svg class="r" style="left:380.00px;top:637.00px;" width="19" height="18" viewBox="0 0 19 18"><path d="M5.3,12 C3.6,10.6 3,8.6 3,6.6 C3,4 4.8,2.3 7.2,2.3 C9.6,2.3 11.3,4 11.3,6.6 C11.3,8.6 10.7,10.6 9.1,12 C12,13 13.7,14.5 13.7,16.2 Q13.7,17 12.9,17 H1.3 Q0.5,17 0.5,16.2 C0.5,14.5 2.3,13 5.3,12 Z" fill="none" stroke="#a9acaf" stroke-width="1.2" stroke-linejoin="round"/><path d="M8.4,0.6 C8.9,0.4 9.5,0.3 10.1,0.3 C12.6,0.3 14.5,2.2 14.5,5 C14.5,7 13.9,8.5 13.2,9.4 C15.6,10.4 17.6,11.6 17.6,13.3 L16.2,14.2" fill="none" stroke="#a9acaf" stroke-width="1.2" stroke-linejoin="round"/></svg>
<div class="t" style="left:411.00px;top:638.40px;font-size:18px;color:#2f70ae;font-weight:400;font-family:'Liberation Sans',sans-serif;">Budgeted Expenses<svg width="16" height="16" viewBox="0 0 16 16" style="vertical-align:-1px;margin-left:4px"><circle cx="8" cy="8" r="7.8" fill="#2f70ae"/><rect x="6.9" y="6.6" width="2.4" height="5.6" fill="#fff"/><rect x="5.8" y="11.2" width="4.6" height="1.4" fill="#fff"/><rect x="5.8" y="6.6" width="2.5" height="1.3" fill="#fff"/><circle cx="8.1" cy="4.2" r="1.35" fill="#fff"/></svg></div>
<div class="t" style="left:637.00px;top:646.79px;font-size:15.3px;color:#717478;font-weight:400;font-family:'Liberation Sans',sans-serif;-webkit-text-stroke:0.1px #717478">Current</div>
<div class="r" style="left:701.00px;top:635.00px;width:149.50px;height:37.00px;background:#ffffff;border:1px solid #e3e5e6;border-bottom:2px solid #c9dfcd;border-radius:4px;box-sizing:border-box"></div>
<div class="r" style="left:809.50px;top:635.00px;width:41.00px;height:37.00px;background:#ececec;border:1px solid #e3e5e6;border-bottom:2px solid #c9dfcd;border-left:none;border-radius:0 4px 4px 0;box-sizing:border-box"></div>
<div class="t" style="left:714.20px;top:645.10px;font-size:16px;color:#484c50;font-weight:400;font-family:'Liberation Sans',sans-serif;">466</div>
<div class="t" style="left:813.50px;top:645.83px;font-size:15.5px;color:#45494c;font-weight:400;font-family:'Liberation Sans',sans-serif;"><span style="letter-spacing:-0.7px">US</span> $</div>
<div class="r" style="left:864.20px;top:635.00px;width:149.50px;height:37.00px;background:#ffffff;border:1px solid #e3e5e6;border-bottom:2px solid #c9dfcd;border-radius:4px;box-sizing:border-box"></div>
<div class="r" style="left:972.70px;top:635.00px;width:41.00px;height:37.00px;background:#ececec;border:1px solid #e3e5e6;border-bottom:2px solid #c9dfcd;border-left:none;border-radius:0 4px 4px 0;box-sizing:border-box"></div>
<div class="t" style="left:877.40px;top:645.10px;font-size:16px;color:#484c50;font-weight:400;font-family:'Liberation Sans',sans-serif;">845</div>
<div class="t" style="left:976.70px;top:645.83px;font-size:15.5px;color:#45494c;font-weight:400;font-family:'Liberation Sans',sans-serif;"><span style="letter-spacing:-0.7px">US</span> $</div>
<div class="r" style="left:1027.40px;top:635.00px;width:149.50px;height:37.00px;background:#ffffff;border:1px solid #e3e5e6;border-bottom:2px solid #c9dfcd;border-radius:4px;box-sizing:border-box"></div>
<div class="r" style="left:1135.90px;top:635.00px;width:41.00px;height:37.00px;background:#ececec;border:1px solid #e3e5e6;border-bottom:2px solid #c9dfcd;border-left:none;border-radius:0 4px 4px 0;box-sizing:border-box"></div>
<div class="t" style="left:1040.60px;top:645.10px;font-size:16px;color:#484c50;font-weight:400;font-family:'Liberation Sans',sans-serif;">856</div>
<div class="t" style="left:1139.90px;top:645.83px;font-size:15.5px;color:#45494c;font-weight:400;font-family:'Liberation Sans',sans-serif;"><span style="letter-spacing:-0.7px">US</span> $</div>
<div class="r" style="left:1190.60px;top:635.00px;width:149.50px;height:37.00px;background:#ffffff;border:1px solid #e3e5e6;border-bottom:2px solid #c9dfcd;border-radius:4px;box-sizing:border-box"></div>
<div class="r" style="left:1299.10px;top:635.00px;width:41.00px;height:37.00px;background:#ececec;border:1px solid #e3e5e6;border-bottom:2px solid #c9dfcd;border-left:none;border-radius:0 4px 4px 0;box-sizing:border-box"></div>
<div class="t" style="left:1203.80px;top:645.10px;font-size:16px;color:#484c50;font-weight:400;font-family:'Liberation Sans',sans-serif;">659</div>
<div class="t" style="left:1303.10px;top:645.83px;font-size:15.5px;color:#45494c;font-weight:400;font-family:'Liberation Sans',sans-serif;"><span style="letter-spacing:-0.7px">US</span> $</div>
<div class="r" style="left:1353.80px;top:635.00px;width:149.50px;height:37.00px;background:#ffffff;border:1px solid #e3e5e6;border-bottom:2px solid #c9dfcd;border-radius:4px;box-sizing:border-box"></div>
<div class="r" style="left:1462.30px;top:635.00px;width:41.00px;height:37.00px;background:#ececec;border:1px solid #e3e5e6;border-bottom:2px solid #c9dfcd;border-left:none;border-radius:0 4px 4px 0;box-sizing:border-box"></div>
<div class="t" style="left:1367.00px;top:645.10px;font-size:16px;color:#484c50;font-weight:400;font-family:'Liberation Sans',sans-serif;">0</div>
<div class="t" style="left:1466.30px;top:645.83px;font-size:15.5px;color:#45494c;font-weight:400;font-family:'Liberation Sans',sans-serif;"><span style="letter-spacing:-0.7px">US</span> $</div>
<div class="t" style="left:345.50px;top:692.45px;font-size:15px;color:#8b8e91;font-weight:400;font-family:'Liberation Sans',sans-serif;">6.</div>
<svg class="r" style="left:380.00px;top:688.50px;" width="19" height="18" viewBox="0 0 19 18"><path d="M5.3,12 C3.6,10.6 3,8.6 3,6.6 C3,4 4.8,2.3 7.2,2.3 C9.6,2.3 11.3,4 11.3,6.6 C11.3,8.6 10.7,10.6 9.1,12 C12,13 13.7,14.5 13.7,16.2 Q13.7,17 12.9,17 H1.3 Q0.5,17 0.5,16.2 C0.5,14.5 2.3,13 5.3,12 Z" fill="none" stroke="#a9acaf" stroke-width="1.2" stroke-linejoin="round"/><path d="M8.4,0.6 C8.9,0.4 9.5,0.3 10.1,0.3 C12.6,0.3 14.5,2.2 14.5,5 C14.5,7 13.9,8.5 13.2,9.4 C15.6,10.4 17.6,11.6 17.6,13.3 L16.2,14.2" fill="none" stroke="#a9acaf" stroke-width="1.2" stroke-linejoin="round"/></svg>
<div class="t" style="left:411.00px;top:689.90px;font-size:18px;color:#2f70ae;font-weight:400;font-family:'Liberation Sans',sans-serif;">Operating Expenses<svg width="16" height="16" viewBox="0 0 16 16" style="vertical-align:-1px;margin-left:4px"><circle cx="8" cy="8" r="7.8" fill="#2f70ae"/><rect x="6.9" y="6.6" width="2.4" height="5.6" fill="#fff"/><rect x="5.8" y="11.2" width="4.6" height="1.4" fill="#fff"/><rect x="5.8" y="6.6" width="2.5" height="1.3" fill="#fff"/><circle cx="8.1" cy="4.2" r="1.35" fill="#fff"/></svg></div>
<div class="t" style="left:637.00px;top:698.29px;font-size:15.3px;color:#717478;font-weight:400;font-family:'Liberation Sans',sans-serif;-webkit-text-stroke:0.1px #717478">Current</div>
<div class="r" style="left:701.00px;top:686.50px;width:149.50px;height:37.00px;background:#ffffff;border:1px solid #e3e5e6;border-bottom:2px solid #c9dfcd;border-radius:4px;box-sizing:border-box"></div>
<div class="r" style="left:809.50px;top:686.50px;width:41.00px;height:37.00px;background:#ececec;border:1px solid #e3e5e6;border-bottom:2px solid #c9dfcd;border-left:none;border-radius:0 4px 4px 0;box-sizing:border-box"></div>
<div class="t" style="left:714.20px;top:696.60px;font-size:16px;color:#484c50;font-weight:400;font-family:'Liberation Sans',sans-serif;">567</div>
<div class="t" style="left:813.50px;top:697.33px;font-size:15.5px;color:#45494c;font-weight:400;font-family:'Liberation Sans',sans-serif;"><span style="letter-spacing:-0.7px">US</span> $</div>
<div class="r" style="left:864.20px;top:686.50px;width:149.50px;height:37.00px;background:#ffffff;border:1px solid #e3e5e6;border-bottom:2px solid #c9dfcd;border-radius:4px;box-sizing:border-box"></div>
<div class="r" style="left:972.70px;top:686.50px;width:41.00px;height:37.00px;background:#ececec;border:1px solid #e3e5e6;border-bottom:2px solid #c9dfcd;border-left:none;border-radius:0 4px 4px 0;box-sizing:border-box"></div>
<div class="t" style="left:877.40px;top:696.60px;font-size:16px;color:#484c50;font-weight:400;font-family:'Liberation Sans',sans-serif;">676</div>
<div class="t" style="left:976.70px;top:697.33px;font-size:15.5px;color:#45494c;font-weight:400;font-family:'Liberation Sans',sans-serif;"><span style="letter-spacing:-0.7px">US</span> $</div>
<div class="r" style="left:1027.40px;top:686.50px;width:149.50px;height:37.00px;background:#ffffff;border:1px solid #e3e5e6;border-bottom:2px solid #c9dfcd;border-radius:4px;box-sizing:border-box"></div>
<div class="r" style="left:1135.90px;top:686.50px;width:41.00px;height:37.00px;background:#ececec;border:1px solid #e3e5e6;border-bottom:2px solid #c9dfcd;border-left:none;border-radius:0 4px 4px 0;box-sizing:border-box"></div>
<div class="t" style="left:1040.60px;top:696.60px;font-size:16px;color:#484c50;font-weight:400;font-family:'Liberation Sans',sans-serif;">456</div>
<div class="t" style="left:1139.90px;top:697.33px;font-size:15.5px;color:#45494c;font-weight:400;font-family:'Liberation Sans',sans-serif;"><span style="letter-spacing:-0.7px">US</span> $</div>
<div class="r" style="left:1190.60px;top:686.50px;width:149.50px;height:37.00px;background:#ffffff;border:1px solid #e3e5e6;border-bottom:2px solid #c9dfcd;border-radius:4px;box-sizing:border-box"></div>
<div class="r" style="left:1299.10px;top:686.50px;width:41.00px;height:37.00px;background:#ececec;border:1px solid #e3e5e6;border-bottom:2px solid #c9dfcd;border-left:none;border-radius:0 4px 4px 0;box-sizing:border-box"></div>
<div class="t" style="left:1203.80px;top:696.60px;font-size:16px;color:#484c50;font-weight:400;font-family:'Liberation Sans',sans-serif;">456</div>
<div class="t" style="left:1303.10px;top:697.33px;font-size:15.5px;color:#45494c;font-weight:400;font-family:'Liberation Sans',sans-serif;"><span style="letter-spacing:-0.7px">US</span> $</div>
<div class="r" style="left:1353.80px;top:686.50px;width:149.50px;height:37.00px;background:#ffffff;border:1px solid #e3e5e6;border-bottom:2px solid #c9dfcd;border-radius:4px;box-sizing:border-box"></div>
<div class="r" style="left:1462.30px;top:686.50px;width:41.00px;height:37.00px;background:#ececec;border:1px solid #e3e5e6;border-bottom:2px solid #c9dfcd;border-left:none;border-radius:0 4px 4px 0;box-sizing:border-box"></div>
<div class="t" style="left:1367.00px;top:696.60px;font-size:16px;color:#484c50;font-weight:400;font-family:'Liberation Sans',sans-serif;">0</div>
<div class="t" style="left:1466.30px;top:697.33px;font-size:15.5px;color:#45494c;font-weight:400;font-family:'Liberation Sans',sans-serif;"><span style="letter-spacing:-0.7px">US</span> $</div>
<div class="t" style="left:345.50px;top:743.95px;font-size:15px;color:#8b8e91;font-weight:400;font-family:'Liberation Sans',sans-serif;">7.</div>
<svg class="r" style="left:380.00px;top:740.00px;" width="19" height="18" viewBox="0 0 19 18"><path d="M5.3,12 C3.6,10.6 3,8.6 3,6.6 C3,4 4.8,2.3 7.2,2.3 C9.6,2.3 11.3,4 11.3,6.6 C11.3,8.6 10.7,10.6 9.1,12 C12,13 13.7,14.5 13.7,16.2 Q13.7,17 12.9,17 H1.3 Q0.5,17 0.5,16.2 C0.5,14.5 2.3,13 5.3,12 Z" fill="none" stroke="#a9acaf" stroke-width="1.2" stroke-linejoin="round"/><path d="M8.4,0.6 C8.9,0.4 9.5,0.3 10.1,0.3 C12.6,0.3 14.5,2.2 14.5,5 C14.5,7 13.9,8.5 13.2,9.4 C15.6,10.4 17.6,11.6 17.6,13.3 L16.2,14.2" fill="none" stroke="#a9acaf" stroke-width="1.2" stroke-linejoin="round"/></svg>
<div class="t" style="left:411.00px;top:741.40px;font-size:18px;color:#2f70ae;font-weight:400;font-family:'Liberation Sans',sans-serif;">Expenses Budget</div>
<div class="t" style="left:411.00px;top:765.90px;font-size:18px;color:#2f70ae;font-weight:400;font-family:'Liberation Sans',sans-serif;">Variance<svg width="16" height="16" viewBox="0 0 16 16" style="vertical-align:-1px;margin-left:4px"><circle cx="8" cy="8" r="7.8" fill="#2f70ae"/><rect x="6.9" y="6.6" width="2.4" height="5.6" fill="#fff"/><rect x="5.8" y="11.2" width="4.6" height="1.4" fill="#fff"/><rect x="5.8" y="6.6" width="2.5" height="1.3" fill="#fff"/><circle cx="8.1" cy="4.2" r="1.35" fill="#fff"/></svg></div>
<div class="t" style="left:637.00px;top:749.79px;font-size:15.3px;color:#717478;font-weight:400;font-family:'Liberation Sans',sans-serif;-webkit-text-stroke:0.1px #717478">Current</div>
<div class="r" style="left:701.00px;top:738.00px;width:149.50px;height:37.00px;background:#eeefef;border:1px solid #e3e5e6;border-bottom:2px solid #c9dfcd;border-radius:4px;box-sizing:border-box"></div>
<div class="r" style="left:809.50px;top:738.00px;width:41.00px;height:37.00px;background:#ececec;border:1px solid #e3e5e6;border-bottom:2px solid #c9dfcd;border-left:none;border-radius:0 4px 4px 0;box-sizing:border-box"></div>
<div class="t" style="left:714.20px;top:748.10px;font-size:16px;color:#a5a8ab;font-weight:400;font-family:'Liberation Sans',sans-serif;">-101</div>
<div class="t" style="left:813.50px;top:748.83px;font-size:15.5px;color:#45494c;font-weight:400;font-family:'Liberation Sans',sans-serif;"><span style="letter-spacing:-0.7px">US</span> $</div>
<div class="r" style="left:864.20px;top:738.00px;width:149.50px;height:37.00px;background:#eeefef;border:1px solid #e3e5e6;border-bottom:2px solid #c9dfcd;border-radius:4px;box-sizing:border-box"></div>
<div class="r" style="left:972.70px;top:738.00px;width:41.00px;height:37.00px;background:#ececec;border:1px solid #e3e5e6;border-bottom:2px solid #c9dfcd;border-left:none;border-radius:0 4px 4px 0;box-sizing:border-box"></div>
<div class="t" style="left:877.40px;top:748.10px;font-size:16px;color:#a5a8ab;font-weight:400;font-family:'Liberation Sans',sans-serif;">169</div>
<div class="t" style="left:976.70px;top:748.83px;font-size:15.5px;color:#45494c;font-weight:400;font-family:'Liberation Sans',sans-serif;"><span style="letter-spacing:-0.7px">US</span> $</div>
<div class="r" style="left:1027.40px;top:738.00px;width:149.50px;height:37.00px;background:#eeefef;border:1px solid #e3e5e6;border-bottom:2px solid #c9dfcd;border-radius:4px;box-sizing:border-box"></div>
<div class="r" style="left:1135.90px;top:738.00px;width:41.00px;height:37.00px;background:#ececec;border:1px solid #e3e5e6;border-bottom:2px solid #c9dfcd;border-left:none;border-radius:0 4px 4px 0;box-sizing:border-box"></div>
<div class="t" style="left:1040.60px;top:748.10px;font-size:16px;color:#a5a8ab;font-weight:400;font-family:'Liberation Sans',sans-serif;">400</div>
<div class="t" style="left:1139.90px;top:748.83px;font-size:15.5px;color:#45494c;font-weight:400;font-family:'Liberation Sans',sans-serif;"><span style="letter-spacing:-0.7px">US</span> $</div>
<div class="r" style="left:1190.60px;top:738.00px;width:149.50px;height:37.00px;background:#eeefef;border:1px solid #e3e5e6;border-bottom:2px solid #c9dfcd;border-radius:4px;box-sizing:border-box"></div>
<div class="r" style="left:1299.10px;top:738.00px;width:41.00px;height:37.00px;background:#ececec;border:1px solid #e3e5e6;border-bottom:2px solid #c9dfcd;border-left:none;border-radius:0 4px 4px 0;box-sizing:border-box"></div>
<div class="t" style="left:1203.80px;top:748.10px;font-size:16px;color:#a5a8ab;font-weight:400;font-family:'Liberation Sans',sans-serif;">203</div>
<div class="t" style="left:1303.10px;top:748.83px;font-size:15.5px;color:#45494c;font-weight:400;font-family:'Liberation Sans',sans-serif;"><span style="letter-spacing:-0.7px">US</span> $</div>
<div class="r" style="left:1353.80px;top:738.00px;width:149.50px;height:37.00px;background:#eeefef;border:1px solid #e3e5e6;border-bottom:2px solid #c9dfcd;border-radius:4px;box-sizing:border-box"></div>
<div class="r" style="left:1462.30px;top:738.00px;width:41.00px;height:37.00px;background:#ececec;border:1px solid #e3e5e6;border-bottom:2px solid #c9dfcd;border-left:none;border-radius:0 4px 4px 0;box-sizing:border-box"></div>
<div class="t" style="left:1367.00px;top:748.10px;font-size:16px;color:#a5a8ab;font-weight:400;font-family:'Liberation Sans',sans-serif;">0</div>
<div class="t" style="left:1466.30px;top:748.83px;font-size:15.5px;color:#45494c;font-weight:400;font-family:'Liberation Sans',sans-serif;"><span style="letter-spacing:-0.7px">US</span> $</div>
<div class="t" style="left:345.50px;top:807.45px;font-size:15px;color:#8b8e91;font-weight:400;font-family:'Liberation Sans',sans-serif;">8.</div>
<svg class="r" style="left:380.00px;top:803.50px;" width="19" height="18" viewBox="0 0 19 18"><path d="M5.3,12 C3.6,10.6 3,8.6 3,6.6 C3,4 4.8,2.3 7.2,2.3 C9.6,2.3 11.3,4 11.3,6.6 C11.3,8.6 10.7,10.6 9.1,12 C12,13 13.7,14.5 13.7,16.2 Q13.7,17 12.9,17 H1.3 Q0.5,17 0.5,16.2 C0.5,14.5 2.3,13 5.3,12 Z" fill="none" stroke="#a9acaf" stroke-width="1.2" stroke-linejoin="round"/><path d="M8.4,0.6 C8.9,0.4 9.5,0.3 10.1,0.3 C12.6,0.3 14.5,2.2 14.5,5 C14.5,7 13.9,8.5 13.2,9.4 C15.6,10.4 17.6,11.6 17.6,13.3 L16.2,14.2" fill="none" stroke="#a9acaf" stroke-width="1.2" stroke-linejoin="round"/></svg>
<div class="t" style="left:411.00px;top:804.90px;font-size:18px;color:#2f70ae;font-weight:400;font-family:'Liberation Sans',sans-serif;">Net Profit<svg width="16" height="16" viewBox="0 0 16 16" style="vertical-align:-1px;margin-left:4px"><circle cx="8" cy="8" r="7.8" fill="#2f70ae"/><rect x="6.9" y="6.6" width="2.4" height="5.6" fill="#fff"/><rect x="5.8" y="11.2" width="4.6" height="1.4" fill="#fff"/><rect x="5.8" y="6.6" width="2.5" height="1.3" fill="#fff"/><circle cx="8.1" cy="4.2" r="1.35" fill="#fff"/></svg></div>
<div class="t" style="left:637.00px;top:813.29px;font-size:15.3px;color:#717478;font-weight:400;font-family:'Liberation Sans',sans-serif;-webkit-text-stroke:0.1px #717478">Current</div>
<div class="r" style="left:701.00px;top:801.50px;width:149.50px;height:37.00px;background:#eeefef;border:1px solid #e3e5e6;border-bottom:2px solid #c9dfcd;border-radius:4px;box-sizing:border-box"></div>
<div class="r" style="left:809.50px;top:801.50px;width:41.00px;height:37.00px;background:#ececec;border:1px solid #e3e5e6;border-bottom:2px solid #c9dfcd;border-left:none;border-radius:0 4px 4px 0;box-sizing:border-box"></div>
<div class="t" style="left:714.20px;top:811.60px;font-size:16px;color:#a5a8ab;font-weight:400;font-family:'Liberation Sans',sans-serif;">9007</div>
<div class="t" style="left:813.50px;top:812.33px;font-size:15.5px;color:#45494c;font-weight:400;font-family:'Liberation Sans',sans-serif;"><span style="letter-spacing:-0.7px">US</span> $</div>
<div class="r" style="left:864.20px;top:801.50px;width:149.50px;height:37.00px;background:#eeefef;border:1px solid #e3e5e6;border-bottom:2px solid #c9dfcd;border-radius:4px;box-sizing:border-box"></div>
<div class="r" style="left:972.70px;top:801.50px;width:41.00px;height:37.00px;background:#ececec;border:1px solid #e3e5e6;border-bottom:2px solid #c9dfcd;border-left:none;border-radius:0 4px 4px 0;box-sizing:border-box"></div>
<div class="t" style="left:877.40px;top:811.60px;font-size:16px;color:#a5a8ab;font-weight:400;font-family:'Liberation Sans',sans-serif;">7781</div>
<div class="t" style="left:976.70px;top:812.33px;font-size:15.5px;color:#45494c;font-weight:400;font-family:'Liberation Sans',sans-serif;"><span style="letter-spacing:-0.7px">US</span> $</div>
<div class="r" style="left:1027.40px;top:801.50px;width:149.50px;height:37.00px;background:#eeefef;border:1px solid #e3e5e6;border-bottom:2px solid #c9dfcd;border-radius:4px;box-sizing:border-box"></div>
<div class="r" style="left:1135.90px;top:801.50px;width:41.00px;height:37.00px;background:#ececec;border:1px solid #e3e5e6;border-bottom:2px solid #c9dfcd;border-left:none;border-radius:0 4px 4px 0;box-sizing:border-box"></div>
<div class="t" style="left:1040.60px;top:811.60px;font-size:16px;color:#a5a8ab;font-weight:400;font-family:'Liberation Sans',sans-serif;">8888</div>
<div class="t" style="left:1139.90px;top:812.33px;font-size:15.5px;color:#45494c;font-weight:400;font-family:'Liberation Sans',sans-serif;"><span style="letter-spacing:-0.7px">US</span> $</div>
<div class="r" style="left:1190.60px;top:801.50px;width:149.50px;height:37.00px;background:#eeefef;border:1px solid #e3e5e6;border-bottom:2px solid #c9dfcd;border-radius:4px;box-sizing:border-box"></div>
<div class="r" style="left:1299.10px;top:801.50px;width:41.00px;height:37.00px;background:#ececec;border:1px solid #e3e5e6;border-bottom:2px solid #c9dfcd;border-left:none;border-radius:0 4px 4px 0;box-sizing:border-box"></div>
<div class="t" style="left:1203.80px;top:811.60px;font-size:16px;color:#a5a8ab;font-weight:400;font-family:'Liberation Sans',sans-serif;">3028</div>
<div class="t" style="left:1303.10px;top:812.33px;font-size:15.5px;color:#45494c;font-weight:400;font-family:'Liberation Sans',sans-serif;"><span style="letter-spacing:-0.7px">US</span> $</div>
<div class="r" style="left:1353.80px;top:801.50px;width:149.50px;height:37.00px;background:#eeefef;border:1px solid #e3e5e6;border-bottom:2px solid #c9dfcd;border-radius:4px;box-sizing:border-box"></div>
<div class="r" style="left:1462.30px;top:801.50px;width:41.00px;height:37.00px;background:#ececec;border:1px solid #e3e5e6;border-bottom:2px solid #c9dfcd;border-left:none;border-radius:0 4px 4px 0;box-sizing:border-box"></div>
<div class="t" style="left:1367.00px;top:811.60px;font-size:16px;color:#a5a8ab;font-weight:400;font-family:'Liberation Sans',sans-serif;">0</div>
<div class="t" style="left:1466.30px;top:812.33px;font-size:15.5px;color:#45494c;font-weight:400;font-family:'Liberation Sans',sans-serif;"><span style="letter-spacing:-0.7px">US</span> $</div>
<div class="t" style="left:345.50px;top:858.45px;font-size:15px;color:#8b8e91;font-weight:400;font-family:'Liberation Sans',sans-serif;">9.</div>
<svg class="r" style="left:380.00px;top:854.50px;" width="19" height="18" viewBox="0 0 19 18"><path d="M5.3,12 C3.6,10.6 3,8.6 3,6.6 C3,4 4.8,2.3 7.2,2.3 C9.6,2.3 11.3,4 11.3,6.6 C11.3,8.6 10.7,10.6 9.1,12 C12,13 13.7,14.5 13.7,16.2 Q13.7,17 12.9,17 H1.3 Q0.5,17 0.5,16.2 C0.5,14.5 2.3,13 5.3,12 Z" fill="none" stroke="#a9acaf" stroke-width="1.2" stroke-linejoin="round"/><path d="M8.4,0.6 C8.9,0.4 9.5,0.3 10.1,0.3 C12.6,0.3 14.5,2.2 14.5,5 C14.5,7 13.9,8.5 13.2,9.4 C15.6,10.4 17.6,11.6 17.6,13.3 L16.2,14.2" fill="none" stroke="#a9acaf" stroke-width="1.2" stroke-linejoin="round"/></svg>
<div class="t" style="left:411.00px;top:855.90px;font-size:18px;color:#2f70ae;font-weight:400;font-family:'Liberation Sans',sans-serif;">Net Profit Margin<svg width="16" height="16" viewBox="0 0 16 16" style="vertical-align:-1px;margin-left:4px"><circle cx="8" cy="8" r="7.8" fill="#2f70ae"/><rect x="6.9" y="6.6" width="2.4" height="5.6" fill="#fff"/><rect x="5.8" y="11.2" width="4.6" height="1.4" fill="#fff"/><rect x="5.8" y="6.6" width="2.5" height="1.3" fill="#fff"/><circle cx="8.1" cy="4.2" r="1.35" fill="#fff"/></svg></div>
<div class="t" style="left:637.00px;top:864.29px;font-size:15.3px;color:#717478;font-weight:400;font-family:'Liberation Sans',sans-serif;-webkit-text-stroke:0.1px #717478">Current</div>
<div class="r" style="left:701.00px;top:852.50px;width:149.50px;height:37.00px;background:#eeefef;border:1px solid #e3e5e6;border-bottom:2px solid #c9dfcd;border-radius:4px;box-sizing:border-box"></div>
<div class="r" style="left:828.50px;top:852.50px;width:22.00px;height:37.00px;background:#ececec;border:1px solid #e3e5e6;border-bottom:2px solid #c9dfcd;border-left:none;border-radius:0 4px 4px 0;box-sizing:border-box"></div>
<div class="t" style="left:714.20px;top:862.60px;font-size:16px;color:#a5a8ab;font-weight:400;font-family:'Liberation Sans',sans-serif;">94.08</div>
<div class="t" style="left:832.50px;top:863.75px;font-size:15px;color:#45494c;font-weight:400;font-family:'Liberation Sans',sans-serif;">%</div>
<div class="r" style="left:864.20px;top:852.50px;width:149.50px;height:37.00px;background:#eeefef;border:1px solid #e3e5e6;border-bottom:2px solid #c9dfcd;border-radius:4px;box-sizing:border-box"></div>
<div class="r" style="left:991.70px;top:852.50px;width:22.00px;height:37.00px;background:#ececec;border:1px solid #e3e5e6;border-bottom:2px solid #c9dfcd;border-left:none;border-radius:0 4px 4px 0;box-sizing:border-box"></div>
<div class="t" style="left:877.40px;top:862.60px;font-size:16px;color:#a5a8ab;font-weight:400;font-family:'Liberation Sans',sans-serif;">92.01</div>
<div class="t" style="left:995.70px;top:863.75px;font-size:15px;color:#45494c;font-weight:400;font-family:'Liberation Sans',sans-serif;">%</div>
<div class="r" style="left:1027.40px;top:852.50px;width:149.50px;height:37.00px;background:#eeefef;border:1px solid #e3e5e6;border-bottom:2px solid #c9dfcd;border-radius:4px;box-sizing:border-box"></div>
<div class="r" style="left:1154.90px;top:852.50px;width:22.00px;height:37.00px;background:#ececec;border:1px solid #e3e5e6;border-bottom:2px solid #c9dfcd;border-left:none;border-radius:0 4px 4px 0;box-sizing:border-box"></div>
<div class="t" style="left:1040.60px;top:862.60px;font-size:16px;color:#a5a8ab;font-weight:400;font-family:'Liberation Sans',sans-serif;">95.12</div>
<div class="t" style="left:1158.90px;top:863.75px;font-size:15px;color:#45494c;font-weight:400;font-family:'Liberation Sans',sans-serif;">%</div>
<div class="r" style="left:1190.60px;top:852.50px;width:149.50px;height:37.00px;background:#eeefef;border:1px solid #e3e5e6;border-bottom:2px solid #c9dfcd;border-radius:4px;box-sizing:border-box"></div>
<div class="r" style="left:1318.10px;top:852.50px;width:22.00px;height:37.00px;background:#ececec;border:1px solid #e3e5e6;border-bottom:2px solid #c9dfcd;border-left:none;border-radius:0 4px 4px 0;box-sizing:border-box"></div>
<div class="t" style="left:1203.80px;top:862.60px;font-size:16px;color:#a5a8ab;font-weight:400;font-family:'Liberation Sans',sans-serif;">86.91</div>
<div class="t" style="left:1322.10px;top:863.75px;font-size:15px;color:#45494c;font-weight:400;font-family:'Liberation Sans',sans-serif;">%</div>
<div class="r" style="left:1353.80px;top:852.50px;width:149.50px;height:37.00px;background:#eeefef;border:1px solid #e3e5e6;border-bottom:2px solid #c9dfcd;border-radius:4px;box-sizing:border-box"></div>
<div class="r" style="left:1481.30px;top:852.50px;width:22.00px;height:37.00px;background:#ececec;border:1px solid #e3e5e6;border-bottom:2px solid #c9dfcd;border-left:none;border-radius:0 4px 4px 0;box-sizing:border-box"></div>
<div class="t" style="left:1367.00px;top:862.60px;font-size:16px;color:#a5a8ab;font-weight:400;font-family:'Liberation Sans',sans-serif;">0</div>
<div class="t" style="left:1485.30px;top:863.75px;font-size:15px;color:#45494c;font-weight:400;font-family:'Liberation Sans',sans-serif;">%</div>
<svg class="r" style="left:20.00px;top:195.00px;" width="23" height="23" viewBox="0 0 23 23"><path d="M6.2,17.5 A8.3,8.3 0 1 1 16.8,17.5" fill="none" stroke="#575c61" stroke-width="1.5" stroke-dasharray="4.5 1.2"/><path d="M10,12.3 L14.8,9.2" stroke="#575c61" stroke-width="1.6" stroke-linecap="round"/></svg>
<svg class="r" style="left:21.00px;top:246.00px;" width="21" height="21" viewBox="0 0 21 21"><path d="M10.4,2 C13.6,2 15.3,4.3 15.3,7.3 C15.3,10 14,11.8 12.6,12.8 V13.8 C16.8,14.5 19,15.8 19,17.8 V19.2 H1.8 V17.8 C1.8,15.8 4,14.5 8.2,13.8 V12.8 C6.8,11.8 5.5,10 5.5,7.3 C5.5,4.3 7.2,2 10.4,2 Z" fill="none" stroke="#575c61" stroke-width="1.4" stroke-linejoin="round"/></svg>
<svg class="r" style="left:21.00px;top:294.00px;" width="21" height="21" viewBox="0 0 21 21"><circle cx="10.2" cy="10.2" r="8.3" fill="none" stroke="#575c61" stroke-width="1.4"/><path d="M9.3,5 V10.6 L12.8,14" fill="none" stroke="#575c61" stroke-width="1.4"/></svg>
<svg class="r" style="left:21.00px;top:347.00px;" width="21" height="21" viewBox="0 0 21 21"><path d="M8,1.8 H17.5 Q18.9,1.8 18.9,3.2 V17.3 Q18.9,18.7 17.5,18.7 H9.2 Q7.8,18.7 7.8,17.3 V14" fill="none" stroke="#575c61" stroke-width="1.4" stroke-linejoin="round"/><path d="M13.5,10 H2.5 M5.5,7 L2.3,10 L5.5,13" fill="none" stroke="#575c61" stroke-width="1.4" stroke-linejoin="round"/></svg>
<svg class="r" style="left:24.00px;top:397.00px;" width="15" height="20" viewBox="0 0 15 20"><path d="M1.8,1.8 H13.2 M1.8,18.2 H13.2 M3.3,1.8 C3.3,7 11.7,8 11.7,10 C11.7,12 3.3,13 3.3,18.2 M11.7,1.8 C11.7,7 3.3,8 3.3,10 C3.3,12 11.7,13 11.7,18.2" fill="none" stroke="#575c61" stroke-width="1.4"/></svg>
<svg class="r" style="left:21.00px;top:449.00px;" width="21" height="15" viewBox="0 0 21 15"><rect x="2" y="1.5" width="4.5" height="4.5" fill="none" stroke="#575c61" stroke-width="1.2"/><rect x="2" y="8.5" width="4.5" height="4.5" fill="none" stroke="#575c61" stroke-width="1.2"/><path d="M8,2.3 H18.5 M8,4.7 H18.5 M8,9.3 H18.5 M8,11.7 H18.5" stroke="#575c61" stroke-width="1.2"/></svg>
<svg class="r" style="left:21.00px;top:499.00px;" width="21" height="15" viewBox="0 0 21 15"><path d="M1.8,12.8 C1.8,7 5.8,2.6 10.5,2.6 C15.2,2.6 19.2,7 19.2,12.8 Z" fill="none" stroke="#3bb15e" stroke-width="1.3" stroke-linejoin="round"/><circle cx="9.5" cy="11" r="1.7" fill="none" stroke="#3bb15e" stroke-width="1.2"/><path d="M9.5,9.5 L6.8,5.8 M13.8,5 L14.8,6.2" stroke="#3bb15e" stroke-width="1.2"/></svg>
<svg class="r" style="left:21.00px;top:698.00px;" width="21" height="21" viewBox="0 0 21 21"><circle cx="10.5" cy="10.6" r="6.3" fill="none" stroke="#575c61" stroke-width="1.4"/><path d="M10.5,1.5 V5 M10.5,16.2 V19.7 M1.4,10.6 H4.9 M16.1,10.6 H19.6" stroke="#575c61" stroke-width="1.4"/></svg>
<svg class="r" style="left:22.00px;top:748.00px;" width="18" height="21" viewBox="0 0 18 21"><rect x="2" y="2" width="12" height="17" rx="0.8" fill="none" stroke="#575c61" stroke-width="1.4"/><path d="M4.7,2 V19" stroke="#575c61" stroke-width="1.2"/><path d="M7,6 H11 M7,8.3 H11" stroke="#575c61" stroke-width="1.1"/><path d="M14,5 H16.2 V8.5 H14 M14,10 H16.2 V13.5 H14" fill="none" stroke="#575c61" stroke-width="1.2"/></svg>
<svg class="r" style="left:21.00px;top:802.00px;" width="21" height="17" viewBox="0 0 21 17"><path d="M8,3.5 H12.5 C15.8,3.5 18.5,5.8 18.5,8.8 C18.5,10.8 17.5,12.2 16,13.2 M13,13.8 H8.5 C5.2,13.8 2.5,11.5 2.5,8.5 C2.5,6.5 3.5,5.1 5,4.1" fill="none" stroke="#575c61" stroke-width="1.4"/><path d="M9.5,1 L7.3,3.5 L9.5,6 M11.5,11.3 L13.7,13.8 L11.5,16.3" fill="none" stroke="#575c61" stroke-width="1.4"/></svg>
<svg class="r" style="left:21.00px;top:849.00px;" width="21" height="19" viewBox="0 0 21 19"><rect x="2.5" y="6" width="16" height="3.8" fill="none" stroke="#575c61" stroke-width="1.4"/><path d="M3.8,9.8 V17.5 H17.2 V9.8 M10.5,6 V17.5" fill="none" stroke="#575c61" stroke-width="1.4"/><path d="M10.5,6 C8,2 5,1.8 5.5,4 C5.8,5.3 8,6 10.5,6 C13,6 15.2,5.3 15.5,4 C16,1.8 13,2 10.5,6" fill="none" stroke="#575c61" stroke-width="1.3"/></svg>
</body></html>
